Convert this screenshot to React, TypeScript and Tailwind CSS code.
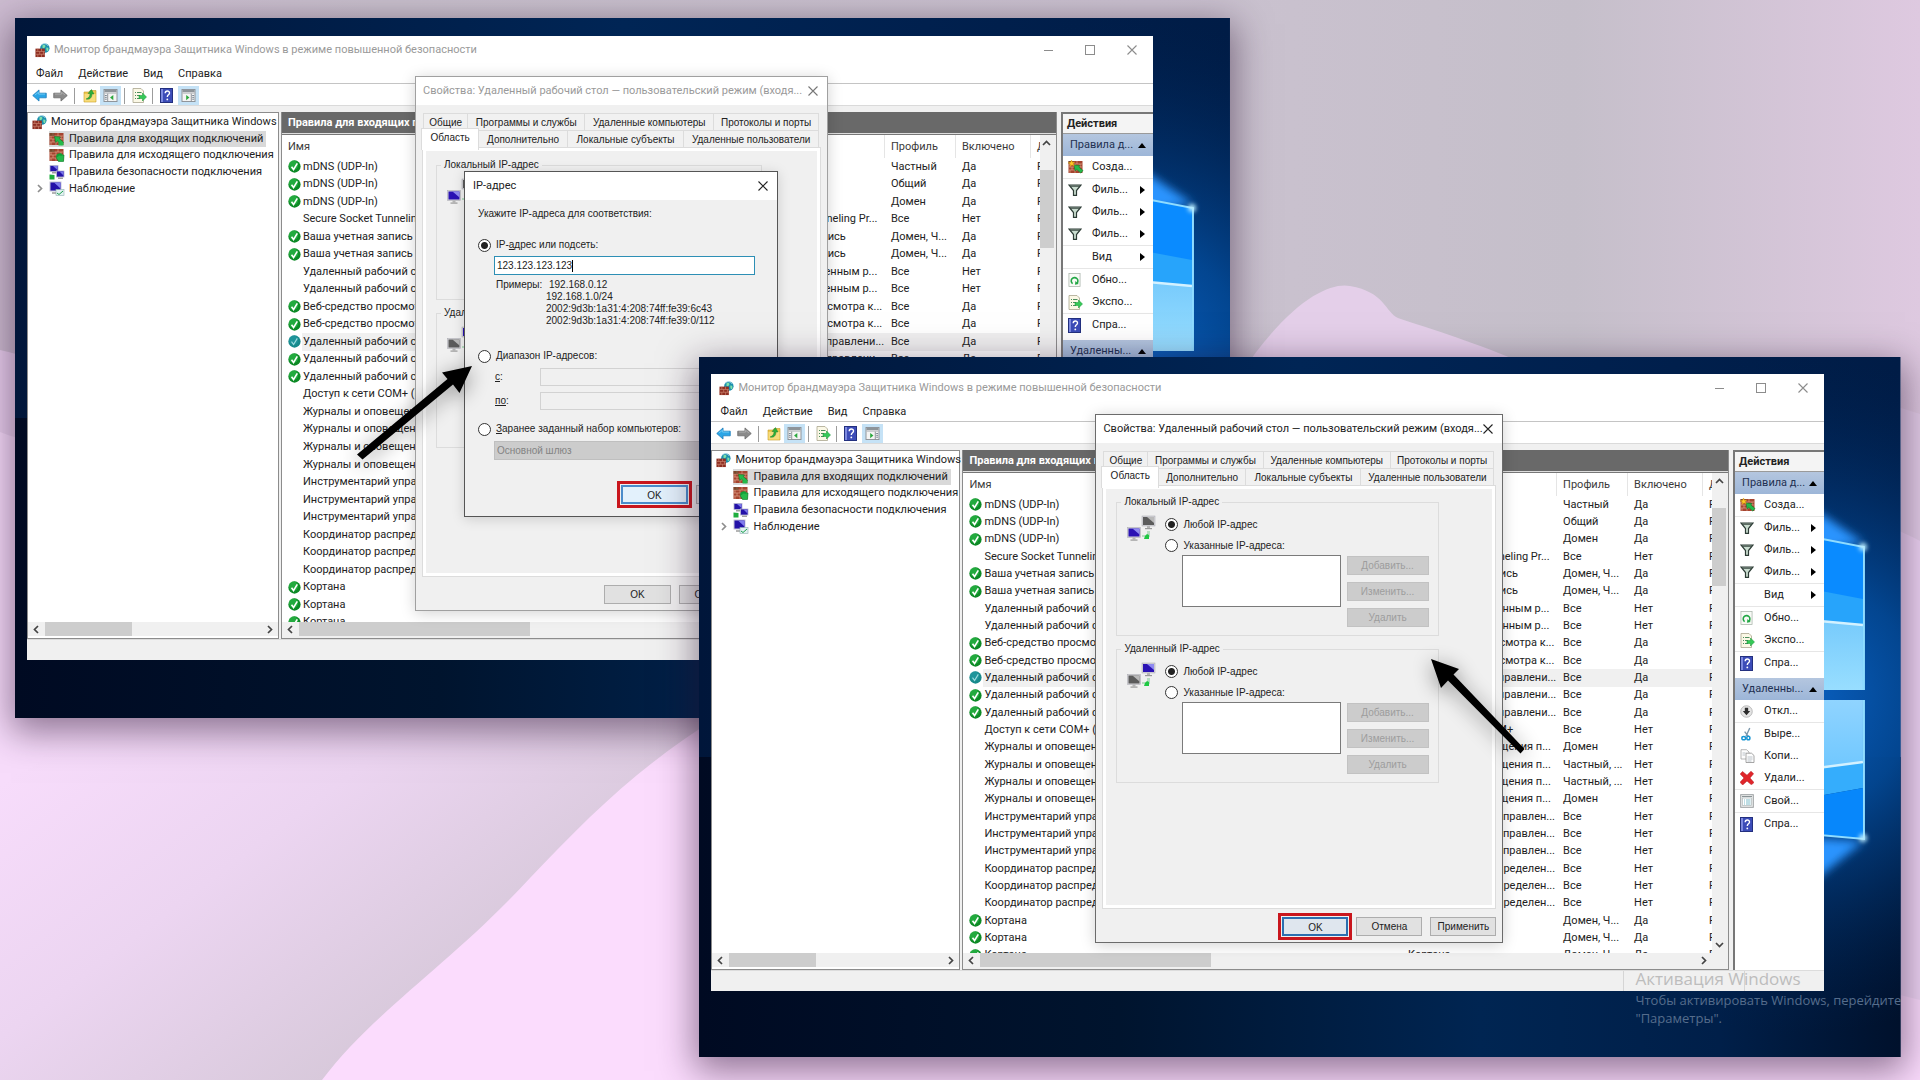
import React, { useId } from "react";
import { clsx } from "clsx";

const UI = "font-['Roboto','Noto_Sans',sans-serif]";
const CLASSIC = "font-['Liberation_Sans',Arial,sans-serif]";

/* ---------- icons ---------- */

function BricksIcon({ children }: { children?: React.ReactNode }) {
  return (
    <svg viewBox="0 0 16 14" className="h-[14px] w-4 shrink-0" aria-hidden="true">
      <rect x="0.5" y="1" width="14" height="12" fill="#a5442f" />
      <path d="M0.5 4h14M0.5 7h14M0.5 10h14M4 1v3M9 1v3M2 4v3M7 4v3M12 4v3M4 7v3M9 7v3M2 10v3M7 10v3M12 10v3" stroke="#e0a08a" strokeWidth="0.7" />
      <rect x="0.5" y="1" width="5" height="3" fill="#5d4a2c" opacity="0.6" />
      {children}
    </svg>
  );
}

function InboundIcon() {
  return (
    <BricksIcon>
      <path d="M5.5 4.5l6 0.5-1.2 1.6 4.2 3.6-2.2 2.6-4-3.8-1.6 1.6z" fill="#25b94a" stroke="#0c7a26" strokeWidth="0.6" />
      <path d="M9.5 10.500h5v3h-5z" fill="#25b94a" />
    </BricksIcon>
  );
}

function OutboundIcon() {
  return (
    <BricksIcon>
      <path d="M15 7l-.5 6.500H9.500L7.200 9.800l1.600-1.600-1-1.400z" fill="#25b94a" stroke="#0c7a26" strokeWidth="0.6" />
      <path d="M8 9a3 3 0 0 1 5-2" fill="none" stroke="#0fa236" strokeWidth="2" />
    </BricksIcon>
  );
}

function NewRuleIcon() {
  return (
    <BricksIcon>
      <path d="M6 5l6 .5-1.2 1.5 4.2 3.5-2.2 2.6-4-3.6L7.200 11z" fill="#25b94a" stroke="#0c7a26" strokeWidth="0.6" />
      <path d="M3.500 0l.9 2.2L6.800 2 5.300 3.700l1 2.200-2.300-1-1.900 1.500.2-2.400L.2 2.800l2.400-.6z" fill="#ffc928" stroke="#c98a00" strokeWidth="0.400" />
    </BricksIcon>
  );
}

function FirewallIcon() {
  return (
    <svg viewBox="0 0 16 16" className="h-[15px] w-[15px] shrink-0" aria-hidden="true">
      <circle cx="10.500" cy="5.500" r="5" fill="#1c8fae" />
      <path d="M8 2.500c2-1.500 3.500 0 3 1.500S8.500 6 8 5zM12 5c2-.5 3 1 2 3s-2 0-2-3z" fill="#7fe0a8" />
      <path d="M7 2c2-2 5-1.500 7 1" stroke="#bdeaf5" strokeWidth="0.800" fill="none" />
      <rect x="0.500" y="6" width="10" height="9" fill="#8e2f22" />
      <path d="M.5 9h10M.5 12h10M3 6v3M7 6v3M5 9v3M9 9v3M3 12v3M7 12v3" stroke="#d08a74" strokeWidth="0.700" />
    </svg>
  );
}

function Monitor({ x, y, on }: { x: number; y: number; on: boolean }) {
  return (
    <g transform={`translate(${x} ${y})`}>
      <rect width="13" height="10" fill="#d4d4d8" stroke="#a5a5ad" strokeWidth="0.500" />
      <rect x="1" y="1" width="11" height="8" fill={on ? "#2a12b4" : "#5b5b5b"} />
      <path d="M5 1h7v6z" fill={on ? "#8f8af0" : "#b9b9b9"} />
      <path d="M5 10h3v2H5z" fill="#b5b5b5" />
      <path d="M3 12h7v1.200H3z" fill="#9b9b9b" />
    </g>
  );
}

function LinkedPcsIcon({ localActive }: { localActive: boolean }) {
  return (
    <svg viewBox="0 0 29 27" className="h-[27px] w-[29px] shrink-0" aria-hidden="true">
      <Monitor x={15} y={1} on={!localActive} />
      <Monitor x={0.5} y={12.500} on={localActive} />
      <path d="M15 20h5v-4h3v6h-8z" fill="#b7dcc0" />
      <path d="M17 24l1-3 2-2 2 1v4z" fill="#1fc843" />
    </svg>
  );
}

function SecurityIcon() {
  return (
    <svg viewBox="0 0 16 15" className="h-[15px] w-4 shrink-0" aria-hidden="true">
      <rect x="1" y="0.500" width="8" height="6" fill="#2412a8" stroke="#b7b7cf" strokeWidth="0.800" />
      <path d="M4 1h4.500v4z" fill="#7a78ea" />
      <rect x="3" y="7" width="4" height="1.500" fill="#a2a2a2" />
      <rect x="7.500" y="6" width="7.500" height="6" fill="#2412a8" stroke="#b7b7cf" strokeWidth="0.800" />
      <path d="M10.500 6.500h4v4z" fill="#7a78ea" />
      <rect x="9" y="12.500" width="5" height="1.500" fill="#a2a2a2" />
      <path d="M.5 14.500V9.500l5 .5v4.500z" fill="#1fae3e" />
    </svg>
  );
}

function MonitoringIcon() {
  return (
    <svg viewBox="0 0 16 15" className="h-[15px] w-4 shrink-0" aria-hidden="true">
      <rect x="1" y="1" width="11" height="9" fill="#2412a8" stroke="#c5c5d6" />
      <path d="M5 1.500h6.500v6z" fill="#7f7dec" />
      <rect x="3" y="11" width="7" height="2" fill="#b5b5b5" />
      <rect x="7" y="8.500" width="8" height="6" fill="#e2f1f1" stroke="#8fb1b1" strokeWidth="0.600" />
      <path d="M8 12l2 1.500L14 10" fill="none" stroke="#18a04a" strokeWidth="1" />
    </svg>
  );
}

function CheckIcon({ dim }: { dim?: boolean }) {
  return (
    <svg viewBox="0 0 14 14" className="size-[13px] shrink-0" aria-hidden="true">
      <circle cx="7" cy="7" r="6.600" fill={dim ? "#178a8c" : "#0d8a26"} />
      <circle cx="6" cy="5.500" r="5" fill={dim ? "#2298a0" : "#2cb848"} opacity="0.700" />
      <path d="M3.800 7.200l2.200 3L10 3.600" fill="none" stroke={dim ? "#9fdde0" : "#ffffff"} strokeWidth={dim ? 1.200 : 1.700} />
    </svg>
  );
}

function ArrowIcon({ back }: { back?: boolean }) {
  return (
    <svg viewBox="0 0 16 14" className={clsx("h-[13px] w-[15px] shrink-0", !back && "-scale-x-100")} aria-hidden="true">
      <path d="M.7 7L7.500 1v3.500h7.800v5H7.500V13z" fill={back ? "#2aa5e6" : "#8b8b8b"} stroke={back ? "#1878b8" : "#666"} strokeWidth="0.800" />
      <path d="M3 6.500l4-3v2h7" fill="none" stroke={back ? "#7fd3f7" : "#b5b5b5"} strokeWidth="0.800" />
    </svg>
  );
}

function FolderUpIcon() {
  return (
    <svg viewBox="0 0 14 15" className="h-[15px] w-[14px]" aria-hidden="true">
      <path d="M1 4h5l1-1.500h6V14H1z" fill="#efc84f" stroke="#c39a28" strokeWidth="0.600" />
      <path d="M1.500 6h11v7.500h-11z" fill="#f7dc7d" />
      <path d="M3 11c3-1 4-3 4-5.500H5L8.500 1.500 11 6H9c0 4-2.500 6-6 5z" fill="#2fae3b" stroke="#15792a" strokeWidth="0.400" />
    </svg>
  );
}

function PaneIcon({ flip }: { flip?: boolean }) {
  return (
    <svg viewBox="0 0 15 14" className="h-[13px] w-[15px]" aria-hidden="true">
      <rect x="0.500" y="0.500" width="14" height="13" fill="#f4f4f4" stroke="#8a8f94" />
      <rect x="1" y="1" width="13" height="2.500" fill="#8d9499" />
      <path d="M1 4.500h13" stroke="#b2b8bc" />
      <path d={flip ? "M10.500 5v8.500" : "M4.500 5v8.500"} stroke="#8a8f94" />
      <path d={flip ? "M11.500 7h2M11.500 9h2M11.500 11h2" : "M1.500 7h2M1.500 9h2M1.500 11h2"} stroke="#6f7f8f" />
      <path d={flip ? "M5 6.500v5.500L8.500 9.200z" : "M10.500 6.500v5.500L7 9.200z"} fill="#2ba83d" />
    </svg>
  );
}

function ExportIcon() {
  return (
    <svg viewBox="0 0 15 15" className="h-[15px] w-[15px] shrink-0" aria-hidden="true">
      <path d="M1 .5h8l2.500 2.500v11.500H1z" fill="#fbf8e6" stroke="#a9a68e" strokeWidth="0.800" />
      <path d="M3 4.500h1M3 7.500h1M3 10.500h1M5 4.500h4.500M5 7.500h3M5 10.500h3" stroke="#4d8f5e" strokeWidth="1" />
      <path d="M7 7.500h3.500V5l4 4-4 4v-2.500H7z" fill="#35c957" stroke="#139233" strokeWidth="0.500" />
    </svg>
  );
}

function HelpIcon() {
  return (
    <svg viewBox="0 0 13 15" className="h-[15px] w-[13px] shrink-0" aria-hidden="true">
      <rect x="0.500" y="0.500" width="12" height="14" fill="#3c4cb8" stroke="#23307f" />
      <rect x="1" y="1" width="2" height="13" fill="#7d8ae0" />
      <path d="M5.200 5.200c0-3 4.300-2.800 4.300-.3 0 1.900-2.200 1.800-2.200 4" fill="none" stroke="#fff" strokeWidth="1.400" />
      <circle cx="7.300" cy="11.400" r="0.900" fill="#fff" />
    </svg>
  );
}

function FilterIcon() {
  return (
    <svg viewBox="0 0 14 12" className="h-3 w-[14px] shrink-0" aria-hidden="true">
      <path d="M1 1h12L8.500 6.500v4.800H5.500V6.500z" fill="#c9dccf" stroke="#2d3c36" strokeWidth="1.200" />
      <path d="M3 2.200h8" stroke="#2d3c36" strokeWidth="1" />
    </svg>
  );
}

function RefreshIcon() {
  return (
    <svg viewBox="0 0 14 15" className="h-[14px] w-[13px] shrink-0" aria-hidden="true">
      <rect x="1" y="0.500" width="12" height="14" fill="#f8faf6" stroke="#a7b3a9" strokeWidth="0.800" />
      <path d="M5 11.500a3.600 3.600 0 1 1 4.500-.3" fill="none" stroke="#22a745" strokeWidth="1.700" />
      <path d="M8 8.500l3.500 3.200-4 1z" fill="#22a745" />
    </svg>
  );
}

function DisableIcon() {
  return (
    <svg viewBox="0 0 14 14" className="size-[13px] shrink-0" aria-hidden="true">
      <circle cx="7" cy="7" r="6.200" fill="#e4e4e4" stroke="#b5b5b5" />
      <path d="M5.200 3h3.600V6.500H11L7 11 3 6.500h2.200z" fill="#2c2c2c" />
    </svg>
  );
}

function CutIcon() {
  return (
    <svg viewBox="0 0 14 15" className="h-[14px] w-[13px] shrink-0" aria-hidden="true">
      <path d="M10.500 1L6.500 10M5 5l4 5" stroke="#7b98ad" strokeWidth="1.500" fill="none" />
      <ellipse cx="4" cy="12" rx="2" ry="1.700" fill="none" stroke="#1795d4" strokeWidth="1.600" />
      <ellipse cx="9" cy="11.800" rx="1.700" ry="2" fill="none" stroke="#1795d4" strokeWidth="1.600" />
    </svg>
  );
}

function CopyIcon() {
  return (
    <svg viewBox="0 0 15 14" className="h-[14px] w-[15px] shrink-0" aria-hidden="true">
      <path d="M1 .7h5.500L9 3v7H1z" fill="#fdfdfd" stroke="#a3a3a3" strokeWidth="0.800" />
      <path d="M6 4.200h5.500L14 6.500v7H6z" fill="#fdfdfd" stroke="#8f8f8f" strokeWidth="0.800" />
      <path d="M2.500 4h3M2.500 6h2.500M7.500 8h5M7.500 10h5M7.500 12h4" stroke="#a9b3bb" strokeWidth="0.800" />
    </svg>
  );
}

function DeleteIcon() {
  return (
    <svg viewBox="0 0 14 14" className="size-[14px] shrink-0" aria-hidden="true">
      <path d="M2.500.5L7 4.200 11 .2l2.600 2.600L10 7l4 4.500-2.600 2.300L7 10l-4.300 4L0 11.300 4 7 .2 3z" fill="#e0262b" stroke="#b3151b" strokeWidth="0.500" />
    </svg>
  );
}

function PropertiesIcon() {
  return (
    <svg viewBox="0 0 14 14" className="size-[14px] shrink-0" aria-hidden="true">
      <rect x="0.700" y="0.700" width="12.600" height="12.600" fill="#eff1f1" stroke="#9b9fa1" />
      <rect x="2.500" y="4" width="9" height="7.500" fill="#fff" stroke="#b0b8ba" strokeWidth="0.700" />
      <path d="M2 2.500h10" stroke="#8a9396" />
      <path d="M4 6h1M6 6h4.500M4 8h1M6 8h4.500M4 10h1M6 10h4.500" stroke="#6fb6c4" strokeWidth="0.900" />
    </svg>
  );
}

function CloseGlyph() {
  return (
    <svg viewBox="0 0 10 10" className="size-[10px]" aria-hidden="true">
      <path d="M.5.5l9 9M9.500.5l-9 9" stroke="currentColor" strokeWidth="1.100" />
    </svg>
  );
}

function Chevron({ dir }: { dir: "left" | "right" | "up" | "down" }) {
  const d = {
    left: "M6 1L2.500 4.500 6 8",
    right: "M3 1l3.500 3.500L3 8",
    up: "M1 6l3.500-3.500L8 6",
    down: "M1 3l3.500 3.500L8 3",
  }[dir];
  return (
    <svg viewBox="0 0 9 9" className="size-[9px]" aria-hidden="true">
      <path d={d} fill="none" stroke="#444" strokeWidth="1.700" />
    </svg>
  );
}

/* ---------- window parts ---------- */

function HScroll({ thumb }: { thumb: string }) {
  return (
    <div className="mb-[2px] flex h-[14px] shrink-0 items-center bg-[#f0f0f0]">
      <button type="button" aria-label="Прокрутить влево" className="flex w-[17px] justify-center">
        <Chevron dir="left" />
      </button>
      <div className="h-full flex-1">
        <div className={clsx("h-full bg-[#cdcdcd]", thumb)} />
      </div>
      <button type="button" aria-label="Прокрутить вправо" className="flex w-[17px] justify-center">
        <Chevron dir="right" />
      </button>
    </div>
  );
}

function ToolSep() {
  return <div className="h-4 w-px bg-[#9c9c9c]" />;
}

type Rule = [name: string, group: string, profile: string, enabled: string, state: 0 | 1 | 2];

const RULES: Rule[] = [
  ["mDNS (UDP-In)", "mDNS", "Частный", "Да", 1],
  ["mDNS (UDP-In)", "mDNS", "Общий", "Да", 1],
  ["mDNS (UDP-In)", "mDNS", "Домен", "Да", 1],
  ["Secure Socket Tunneling Protocol", "Secure Socket Tunneling Pr...", "Все", "Нет", 0],
  ["Ваша учетная запись", "Ваша учетная запись", "Домен, Ч...", "Да", 1],
  ["Ваша учетная запись", "Ваша учетная запись", "Домен, Ч...", "Да", 1],
  ["Удаленный рабочий стол", "Управление удаленным р...", "Все", "Нет", 0],
  ["Удаленный рабочий стол", "Управление удаленным р...", "Все", "Нет", 0],
  ["Веб-средство просмотра", "Веб-средство просмотра к...", "Все", "Да", 1],
  ["Веб-средство просмотра", "Веб-средство просмотра к...", "Все", "Да", 1],
  ["Удаленный рабочий стол", "Дистанционное управлени...", "Все", "Да", 2],
  ["Удаленный рабочий стол", "Дистанционное управлени...", "Все", "Да", 1],
  ["Удаленный рабочий стол", "Дистанционное управлени...", "Все", "Да", 1],
  ["Доступ к сети COM+ (DCOM)", "Доступ к сети COM+", "Все", "Нет", 0],
  ["Журналы и оповещения", "Журналы и оповещения п...", "Домен", "Нет", 0],
  ["Журналы и оповещения", "Журналы и оповещения п...", "Частный, ...", "Нет", 0],
  ["Журналы и оповещения", "Журналы и оповещения п...", "Частный, ...", "Нет", 0],
  ["Журналы и оповещения", "Журналы и оповещения п...", "Домен", "Нет", 0],
  ["Инструментарий управления", "Инструментарий управлен...", "Все", "Нет", 0],
  ["Инструментарий управления", "Инструментарий управлен...", "Все", "Нет", 0],
  ["Инструментарий управления", "Инструментарий управлен...", "Все", "Нет", 0],
  ["Координатор распределения", "Координатор распределен...", "Все", "Нет", 0],
  ["Координатор распределения", "Координатор распределен...", "Все", "Нет", 0],
  ["Координатор распределения", "Координатор распределен...", "Все", "Нет", 0],
  ["Кортана", "Кортана", "Домен, Ч...", "Да", 1],
  ["Кортана", "Кортана", "Домен, Ч...", "Да", 1],
  ["Кортана", "Кортана", "Домен, Ч...", "Да", 1],
];

function RulesTable({ height }: { height: string }) {
  const th = "h-[23px] border-l border-[#e5e5e5] py-0 pl-[6px] text-left font-normal text-[#3a3a3a]";
  return (
    <table className={clsx("w-full table-fixed border-separate border-spacing-0 leading-[16px] whitespace-nowrap", height)}>
      <colgroup>
        <col />
        <col className="w-[155px]" />
        <col className="w-[71px]" />
        <col className="w-[75px]" />
        <col className="w-[10px]" />
      </colgroup>
      <thead>
        <tr>
          <th className="h-[23px] py-0 pl-[6px] text-left font-normal text-[#3a3a3a]">Имя</th>
          <th className={th}>Группа</th>
          <th className={th}>Профиль</th>
          <th className={th}>Включено</th>
          <th className={clsx(th, "overflow-hidden")}>Действие</th>
        </tr>
      </thead>
      <tbody>
        {RULES.map(([name, group, profile, enabled, state], i) => (
          <tr key={i} className={clsx(state === 2 && "bg-[linear-gradient(to_right,transparent_20px,#f0f0f0_20px)]")}>
            <td className="overflow-hidden p-0 pl-[6px]">
              <span className="flex items-center gap-[2px]">
                <span className="flex w-[13px] shrink-0">{state > 0 && <CheckIcon dim={state === 2} />}</span>
                {name}
              </span>
            </td>
            <td className="p-0 pl-[7px]">{group}</td>
            <td className="p-0 pl-[7px]">{profile}</td>
            <td className="p-0 pl-[7px]">{enabled}</td>
            <td className="overflow-hidden p-0 pl-[7px]">Разрешить</td>
          </tr>
        ))}
      </tbody>
    </table>
  );
}

function ActionGroup({ title }: { title: string }) {
  return (
    <h3 className="flex h-[22px] shrink-0 items-center bg-gradient-to-b from-[#b4c6df] to-[#9db6d8] pr-[7px] pl-[7px] text-[#1f3152]">
      <span className="flex-1 truncate">{title}</span>
      <svg viewBox="0 0 8 5" className="h-[5px] w-2" aria-hidden="true">
        <path d="M4 0l4 5H0z" fill="#000" />
      </svg>
    </h3>
  );
}

function Action({ icon, label, more, line }: { icon?: React.ReactNode; label: string; more?: boolean; line?: boolean }) {
  return (
    <li className={clsx("h-[22px] shrink-0", line && "mb-px")}>
      <button type="button" className={clsx("flex h-full w-full items-center pr-2 pl-[5px]", line && "shadow-[0_1px_0_#e6e6e6]")}>
        <span className="flex w-[24px] shrink-0">{icon}</span>
        <span className="flex-1 text-left">{label}</span>
        {more && (
          <svg viewBox="0 0 5 8" className="h-2 w-[5px]" aria-hidden="true">
            <path d="M0 0l5 4-5 4z" fill="#000" />
          </svg>
        )}
      </button>
    </li>
  );
}

function ActionsPane() {
  return (
    <aside className="flex min-h-0 min-w-0 flex-col overflow-hidden border-t-2 border-l-2 border-[#777] bg-white">
      <h2 className="h-[20px] shrink-0 border-b border-[#9a9a9a] bg-[#f4f4f4] pl-[4px] leading-[19px] font-bold text-[#222]">Действия</h2>
      <ActionGroup title="Правила д..." />
      <ul>
        <Action icon={<NewRuleIcon />} label="Созда..." line />
        <Action icon={<FilterIcon />} label="Филь..." more />
        <Action icon={<FilterIcon />} label="Филь..." more />
        <Action icon={<FilterIcon />} label="Филь..." more line />
        <Action label="Вид" more line />
        <Action icon={<RefreshIcon />} label="Обно..." />
        <Action icon={<ExportIcon />} label="Экспо..." line />
        <Action icon={<HelpIcon />} label="Спра..." />
      </ul>
      <div className="h-1 shrink-0" />
      <ActionGroup title="Удаленны..." />
      <ul>
        <Action icon={<DisableIcon />} label="Откл..." line />
        <Action icon={<CutIcon />} label="Выре..." />
        <Action icon={<CopyIcon />} label="Копи..." />
        <Action icon={<DeleteIcon />} label="Удали..." line />
        <Action icon={<PropertiesIcon />} label="Свой..." line />
        <Action icon={<HelpIcon />} label="Спра..." />
      </ul>
    </aside>
  );
}

function TreeItem({ icon, label, selected, chevron }: { icon: React.ReactNode; label: string; selected?: boolean; chevron?: boolean }) {
  return (
    <li className="flex items-center pl-[7px]">
      <span className="flex w-[14px] opacity-60">{chevron && <Chevron dir="right" />}</span>
      <button type="button" className={clsx("flex h-4 items-center gap-1 pr-[3px]", selected && "bg-[#d9d9d9]")}>
        {icon}
        <span>{label}</span>
      </button>
    </li>
  );
}

function FirewallWindow({ body, table, children }: { body: string; table: string; children?: React.ReactNode }) {
  return (
    <section className={clsx("relative flex flex-col bg-white text-[11px] leading-[16px] text-[#222]", UI)}>
      <header className="flex h-7 items-center pl-[8px] text-[#9a9a9a]">
        <FirewallIcon />
        <h1 className="ml-1 flex-1 truncate">Монитор брандмауэра Защитника Windows в режиме повышенной безопасности</h1>
        <div className="flex items-center gap-8 pr-4">
          <button type="button" aria-label="Свернуть" className="h-px w-[9px] bg-[#8c8c8c]" />
          <button type="button" aria-label="Развернуть" className="size-[10px] border border-[#8c8c8c]" />
          <button type="button" aria-label="Закрыть" className="text-[#8c8c8c]">
            <CloseGlyph />
          </button>
        </div>
      </header>
      <nav className="flex h-5 items-center gap-[15px] border-b border-[#c4c4c4] pl-[9px]">
        <button type="button">Файл</button>
        <button type="button">Действие</button>
        <button type="button">Вид</button>
        <button type="button">Справка</button>
      </nav>
      <div className="flex h-[22px] items-center border-b border-[#dadada] pt-[2px] pl-[5px]">
        <button type="button" aria-label="Назад"><ArrowIcon back /></button>
        <button type="button" aria-label="Вперед" className="mr-[6px] ml-[6px]"><ArrowIcon /></button>
        <ToolSep />
        <button type="button" aria-label="Вверх" className="mr-[3px] ml-[8px]"><FolderUpIcon /></button>
        <button type="button" aria-label="Дерево" className="mr-[3px] flex h-[19px] w-[21px] items-center justify-center bg-[#c5e2f6]"><PaneIcon /></button>
        <ToolSep />
        <button type="button" aria-label="Экспорт" className="mr-[5px] ml-[7px]"><ExportIcon /></button>
        <ToolSep />
        <button type="button" aria-label="Справка" className="mr-[5px] ml-[7px]"><HelpIcon /></button>
        <button type="button" aria-label="Действия" className="flex h-[19px] w-[21px] items-center justify-center bg-[#c5e2f6]"><PaneIcon flip /></button>
      </div>
      <div className={clsx("grid grid-cols-[252fr_778fr_92fr] grid-rows-[minmax(0,1fr)] gap-x-[2px] bg-[#f0f0f0] pt-[6px]", body)}>
        <div className="flex min-w-0 flex-col border border-[#8c8c8c] bg-white">
          <ul className="mt-px grid h-[83px] auto-rows-fr whitespace-nowrap">
            <li className="flex items-center pl-1">
              <button type="button" className="flex items-center gap-1">
                <FirewallIcon />
                <span>Монитор брандмауэра Защитника Windows</span>
              </button>
            </li>
            <TreeItem icon={<InboundIcon />} label="Правила для входящих подключений" selected />
            <TreeItem icon={<OutboundIcon />} label="Правила для исходящего подключения" />
            <TreeItem icon={<SecurityIcon />} label="Правила безопасности подключения" />
            <TreeItem icon={<MonitoringIcon />} label="Наблюдение" chevron />
          </ul>
          <div className="flex-1" />
          <HScroll thumb="w-[87px]" />
        </div>
        <div className="mr-[2px] flex min-w-0 flex-col border-x border-b border-[#8c8c8c] bg-white">
          <h2 className="h-[21px] shrink-0 bg-[#696969] pl-[6px] leading-[22px] font-bold text-white">Правила для входящих подключений</h2>
          <div className="h-[2px] shrink-0 border-b border-[#777] bg-[#ddd]" />
          <div className="flex min-h-0 flex-1">
            <div className="min-w-0 flex-1 overflow-hidden">
              <RulesTable height={table} />
            </div>
            <div className="flex w-[14px] flex-col items-center bg-[#f0f0f0]">
              <button type="button" aria-label="Прокрутить вверх" className="flex h-[35px] pt-[4px]"><Chevron dir="up" /></button>
              <div className="h-[78px] w-full bg-[#cdcdcd]" />
              <div className="flex-1" />
              <button type="button" aria-label="Прокрутить вниз" className="pb-[4px]"><Chevron dir="down" /></button>
            </div>
            <div className="w-[2px] bg-[#f0f0f0]" />
          </div>
          <div className="shrink-0 bg-[#f0f0f0] pr-[16px]">
            <HScroll thumb="w-[231px]" />
          </div>
        </div>
        <ActionsPane />
      </div>
      <footer className="flex h-[21px] border-t border-[#dcdcdc] bg-[#f0f0f0]">
        <div className="flex-1" />
        <div className="w-[121px] border-l border-[#d5d5d5]" />
        <div className="w-[80px] border-l border-[#d5d5d5]" />
      </footer>
      {children}
    </section>
  );
}

/* ---------- dialogs ---------- */

function Radio({ name, label, checked, className }: { name: string; label: React.ReactNode; checked?: boolean; className?: string }) {
  return (
    <label className={clsx("flex items-center gap-[5px]", className)}>
      <input
        type="radio"
        name={name}
        defaultChecked={checked}
        className="size-[13px] shrink-0 appearance-none rounded-full border border-[#333] bg-white checked:bg-[radial-gradient(circle,#222_3px,#fff_4px)]"
      />
      <span>{label}</span>
    </label>
  );
}

function PushButton({ label, primary, hot, framed, wide }: { label: string; primary?: boolean; hot?: boolean; framed?: boolean; wide?: boolean }) {
  return (
    <button
      type="button"
      className={clsx(
        "h-[19px] border leading-[17px]",
        wide ? "w-[67px]" : "w-[66px]",
        primary ? "border-2 border-[#2b6fb0] bg-[#dfe6ee] leading-[15px]" : hot ? "border-2 border-[#4a8ccb] bg-[#e3f1fc] leading-[15px]" : "border-[#adadad] bg-[#e1e1e1]",
        framed && "outline-[3px] outline-offset-[1px] outline-[#c9161d]",
      )}
    >
      {label}
    </button>
  );
}

function Tab({ label, selected }: { label: string; selected?: boolean }) {
  return (
    <button
      type="button"
      role="tab"
      aria-selected={!!selected}
      className={clsx(
        "overflow-hidden border-t border-r border-[#dcdcdc] whitespace-nowrap",
        selected ? "relative -mt-[2px] -mb-[3px] -ml-[2px] border-l bg-white pb-[5px]" : "bg-[#f1f1f1] first:border-l",
      )}
    >
      {label}
    </button>
  );
}

function ScopeGroup({ title, local, height }: { title: string; local: boolean; height: string }) {
  const id = useId();
  return (
    <fieldset className={clsx("relative flex w-[85%] border border-[#dcdcdc] pr-[9px] pl-[10px]", height)}>
      <legend className="absolute -top-[8px] left-[4px] bg-[#f0f0f0] px-[3px] leading-[14px]">{title}</legend>
      <div className="pt-[12px]">
        <LinkedPcsIcon localActive={local} />
      </div>
      <div className="ml-[9px] flex flex-1 flex-col pt-[14px]">
        <Radio name={id} label="Любой IP-адрес" checked className="h-[14px]" />
        <Radio name={id} label="Указанные IP-адреса:" className="mt-[7px] h-[14px]" />
        <div className="mt-[3px] ml-[17px] flex gap-[6px]">
          <select multiple aria-label={title} className="h-[52px] min-w-0 flex-1 appearance-none border border-[#7a7a7a] bg-white" />
          <div className="flex w-[82px] flex-col gap-[7px] pt-px text-[#9d9d9d]">
            <button type="button" disabled className="h-[19px] border border-[#c2c2c2] bg-[#cccccc]">Добавить...</button>
            <button type="button" disabled className="h-[19px] border border-[#c2c2c2] bg-[#cccccc]">Изменить...</button>
            <button type="button" disabled className="h-[19px] border border-[#c2c2c2] bg-[#cccccc]">Удалить</button>
          </div>
        </div>
      </div>
    </fieldset>
  );
}

function PropertiesDialog({ active, place }: { active: boolean; place: string }) {
  const group = active ? "h-[134px]" : "h-[135px]";
  return (
    <div role="dialog" className={clsx("absolute flex flex-col border bg-[#f0f0f0] shadow-[0_2px_14px_rgba(0,0,0,0.18)]", active ? "border-[#6b6b6b]" : "border-[#a0a0a0]", place)}>
      <header className={clsx("flex h-7 shrink-0 items-center bg-white pr-[9px] pl-[7px]", active ? "text-[#222]" : "text-[#9a9a9a]")}>
        <h2 className="flex-1 whitespace-nowrap">Свойства: Удаленный рабочий стол — пользовательский режим (входя...</h2>
        <button type="button" aria-label="Закрыть" className={active ? "text-[#222]" : "text-[#777]"}><CloseGlyph /></button>
      </header>
      <div className={clsx("flex min-h-0 flex-1 flex-col px-[6px] pt-2 pb-[6px] text-[10px] leading-[15px]", CLASSIC)}>
        <div role="tablist" className="mr-[2px] ml-[1px]">
          <div className="grid h-[17px] grid-cols-[45fr_116fr_128fr_104fr]">
            <Tab label="Общие" />
            <Tab label="Программы и службы" />
            <Tab label="Удаленные компьютеры" />
            <Tab label="Протоколы и порты" />
          </div>
          <div className="grid h-[17px] grid-cols-[56fr_88fr_116fr_134fr]">
            <Tab label="Область" selected />
            <Tab label="Дополнительно" />
            <Tab label="Локальные субъекты" />
            <Tab label="Удаленные пользователи" />
          </div>
        </div>
        <div className={clsx("flex flex-1 flex-col gap-[13px] border border-[#dcdcdc] bg-[#f0f0f0] pl-[13px] shadow-[inset_0_0_0_3px_#fff]", active ? "pt-4" : "pt-[17px]")}>
          <ScopeGroup title="Локальный IP-адрес" local height={group} />
          <ScopeGroup title="Удаленный IP-адрес" local={false} height={group} />
        </div>
        <div className="mt-2 flex justify-end gap-2">
          <PushButton label="OK" primary={active} framed={active} wide={!active} />
          <PushButton label="Отмена" wide={!active} />
          <PushButton label="Применить" wide={!active} />
        </div>
      </div>
    </div>
  );
}

function IpDialog() {
  const id = useId();
  return (
    <div role="dialog" className="absolute top-[135px] left-[437px] flex h-[346px] w-[314px] flex-col border border-[#555] bg-[#f0f0f0] shadow-[0_2px_12px_rgba(0,0,0,0.15)]">
      <header className="flex h-7 shrink-0 items-center justify-between bg-white pr-[9px] pl-[8px]">
        <h2>IP-адрес</h2>
        <button type="button" aria-label="Закрыть" className="text-[#222]"><CloseGlyph /></button>
      </header>
      <div className={clsx("flex flex-1 flex-col pt-[7px] pr-[22px] pl-[13px] text-[10px] leading-[14px]", CLASSIC)}>
        <p>Укажите IP-адреса для соответствия:</p>
        <Radio name={id} checked label={<>IP-<u>а</u>дрес или подсеть:</>} className="mt-[17px]" />
        <div className="mt-[4px] ml-[16px] flex h-[19px] items-center border border-[#2d8fb5] bg-white pl-[2px]">
          <input aria-label="IP-адрес или подсеть" defaultValue="123.123.123.123" className="field-sizing-content outline-none" />
          <span className="h-3 w-px bg-black" />
        </div>
        <div className="mt-[4px] ml-[18px] flex leading-[12px]">
          <p className="w-[50px]">Примеры:</p>
          <div>
            <p className="pl-[3px]">192.168.0.12</p>
            <p>192.168.1.0/24</p>
            <p>2002:9d3b:1a31:4:208:74ff:fe39:6c43</p>
            <p>2002:9d3b:1a31:4:208:74ff:fe39:0/112</p>
          </div>
        </div>
        <Radio name={id} label={<><u>Д</u>иапазон IP-адресов:</>} className="mt-[22px]" />
        <label className="mt-[5px] ml-[17px] flex items-center">
          <span className="w-[45px]"><u>с</u>:</span>
          <input disabled className="h-[18px] min-w-0 flex-1 border border-[#d2d2d2] bg-[#f0f0f0]" />
        </label>
        <label className="mt-[6px] ml-[17px] flex items-center">
          <span className="w-[45px]"><u>по</u>:</span>
          <input disabled className="h-[18px] min-w-0 flex-1 border border-[#d2d2d2] bg-[#f0f0f0]" />
        </label>
        <Radio name={id} label={<><u>З</u>аранее заданный набор компьютеров:</>} className="mt-[12px]" />
        <select disabled aria-label="Набор компьютеров" className="mt-[5px] ml-[16px] h-[19px] appearance-none border border-[#bfbfbf] bg-[#cccccc] pl-[2px] text-[#838383] opacity-100">
          <option>Основной шлюз</option>
        </select>
        <div className="mt-[25px] -mr-[8px] flex justify-end gap-2">
          <PushButton label="OK" hot framed wide />
          <PushButton label="Отмена" wide />
        </div>
      </div>
    </div>
  );
}

/* ---------- scenery ---------- */

function Wallpaper() {
  const id = useId();
  const u = (n: string) => `url(#${id}${n})`;
  return (
    <svg viewBox="0 0 1215 700" preserveAspectRatio="none" className="absolute inset-0 h-full w-full" aria-hidden="true">
      <defs>
        <linearGradient id={`${id}base`} x1="0" y1="0" x2="1" y2="0">
          <stop offset="0" stopColor="#00163a" />
          <stop offset="0.5" stopColor="#002555" />
          <stop offset="0.75" stopColor="#00204e" />
          <stop offset="1" stopColor="#001c46" />
        </linearGradient>
        <linearGradient id={`${id}low`} x1="0" y1="0" x2="1" y2="0">
          <stop offset="0" stopColor="#000a22" />
          <stop offset="0.35" stopColor="#00142e" />
          <stop offset="0.65" stopColor="#002552" />
          <stop offset="0.85" stopColor="#001f49" />
          <stop offset="1" stopColor="#00112c" />
        </linearGradient>
        <radialGradient id={`${id}halo`} gradientUnits="userSpaceOnUse" cx="1110" cy="338" r="340">
          <stop offset="0" stopColor="#0a62c4" />
          <stop offset="0.35" stopColor="#034a98" stopOpacity="0.9" />
          <stop offset="1" stopColor="#00204e" stopOpacity="0" />
        </radialGradient>
        <linearGradient id={`${id}pale`} x1="0" y1="0" x2="0" y2="1">
          <stop offset="0" stopColor="#6cc4fb" />
          <stop offset="1" stopColor="#98deff" />
        </linearGradient>
        <linearGradient id={`${id}pale2`} x1="0" y1="0" x2="0" y2="1">
          <stop offset="0" stopColor="#90d4ff" />
          <stop offset="1" stopColor="#62c2ff" />
        </linearGradient>
        <filter id={`${id}blur`} x="-50%" y="-50%" width="200%" height="200%">
          <feGaussianBlur stdDeviation="5" />
        </filter>
        <filter id={`${id}soft`} x="-200%" y="-200%" width="500%" height="500%">
          <feGaussianBlur stdDeviation="2" />
        </filter>
      </defs>
      <rect width="1215" height="700" fill={u("base")} />
      <rect y="400" width="1215" height="300" fill={u("low")} />
      <rect width="1215" height="700" fill={u("halo")} />
      <path d="M1110 140l68 46-68 10z" fill="#2a94ff" filter={u("blur")} />
      <path d="M1110 480l68 4-68 54z" fill="#2a94ff" filter={u("blur")} />
      <path d="M900 140L1177 190V333H900z" fill="#0a8bff" />
      <path d="M900 190L1177 242V333H900z" fill="#27a4fb" />
      <path d="M900 240L1177 268V333H900z" fill={u("pale")} />
      <path d="M1100 261L1177 268" stroke="#d3f1ff" strokeWidth="2.500" />
      <path d="M900 343h277v62L900 440z" fill={u("pale2")} />
      <path d="M900 440L1177 405v26L900 480z" fill="#35adfc" />
      <path d="M900 480L1177 431v51L900 460z" fill="#0787fb" />
      <path d="M1100 415L1177 405" stroke="#d3f1ff" strokeWidth="2.500" />
      <path d="M1110 177L1178 190V333" fill="none" stroke="#8fdcff" strokeWidth="2" />
      <path d="M1178 343V482L1110 476" fill="none" stroke="#8fdcff" strokeWidth="2" />
      <circle cx="1177" cy="190" r="4" fill="#b9ecff" filter={u("soft")} />
      <circle cx="1177" cy="481" r="4" fill="#b9ecff" filter={u("soft")} />
    </svg>
  );
}

function Backdrop() {
  return (
    <svg viewBox="0 0 1920 1080" preserveAspectRatio="none" className="absolute inset-0 h-full w-full" aria-hidden="true">
      <defs>
        <linearGradient id="sky" x1="0" y1="0" x2="1" y2="0">
          <stop offset="0" stopColor="#cdbcd1" />
          <stop offset="0.2" stopColor="#c9c1cd" />
          <stop offset="0.6" stopColor="#cbc2d0" />
          <stop offset="0.82" stopColor="#c5bfca" />
          <stop offset="1" stopColor="#dec9e0" />
        </linearGradient>
        <linearGradient id="hill" gradientUnits="userSpaceOnUse" x1="60" y1="740" x2="330" y2="1100">
          <stop offset="0" stopColor="#f7dcfb" />
          <stop offset="0.45" stopColor="#ecd5f1" />
          <stop offset="1" stopColor="#d6c8d9" />
        </linearGradient>
      </defs>
      <rect width="1920" height="1080" fill="url(#sky)" />
      <path d="M1240 375C1290 300 1330 282 1350 286C1385 292 1385 312 1398 318C1440 332 1500 350 1560 380L1901 408L1920 414V1080H1240z" fill="#e4cfe9" />
      <path d="M1600 440C1750 470 1860 510 1920 541V1080H1600z" fill="#efd6f5" />
      <path d="M0 350C80 370 300 420 700 640V1080H0z" fill="#e9cfee" />
      <path d="M0 432C100 470 400 520 720 700V1080H0z" fill="url(#hill)" />
      <path d="M720 716C640 765 590 815 530 878C450 965 375 1010 322 1080H1920V1000L720 700z" fill="#fbdcfd" />
    </svg>
  );
}

function Pointer({ className, flip }: { className: string; flip?: boolean }) {
  return (
    <svg viewBox="0 0 114 94" className={clsx("absolute overflow-visible drop-shadow-[0_4px_10px_rgba(0,0,0,0.45)]", className)} aria-hidden="true">
      {flip ? (
        <path d="M0 0L28 10 22.500 15.500 93.500 90 89.500 94.500 17 21.500 10 29z" />
      ) : (
        <path d="M114 0L84 6.500 89.500 13 -1 88.500 4.500 93.500 95 18.500 101.500 27z" />
      )}
    </svg>
  );
}

export default function App() {
  return (
    <main className="relative min-h-screen overflow-hidden bg-[#e9d4ee]">
      <Backdrop />

      <div className="absolute top-[18px] left-[15px] w-[63.28%] pt-[18px] pr-[77px] pb-[58px] pl-3 shadow-[0_10px_34px_4px_rgba(40,15,45,0.5)]">
        <Wallpaper />
        <FirewallWindow body="h-[533px]" table="h-[496px]">
          <PropertiesDialog active={false} place="top-[40px] left-[388px] h-[535px] w-[413px]" />
          <IpDialog />
        </FirewallWindow>
        <Pointer className="top-[348px] left-[343px] h-[94px] w-[114px]" />
      </div>

      <div className="absolute top-[357px] right-[19px] left-[36.43%] pt-[17px] pr-[77px] pb-[66px] pl-3 shadow-[0_10px_34px_4px_rgba(40,15,45,0.5)]">
        <Wallpaper />
        <FirewallWindow body="h-[526px]" table="h-[491px]">
          <PropertiesDialog active place="top-[40px] left-[384px] h-[529px] w-[408px]" />
        </FirewallWindow>
        <Pointer flip className="top-[302px] left-[732px] h-[94px] w-[114px]" />
        <div className={clsx("pointer-events-none absolute right-0 bottom-[30px] left-[936px] overflow-hidden whitespace-nowrap font-['Open_Sans','Noto_Sans',sans-serif]")}>
          <p className="text-[17px] leading-[24px] text-[#bdbdbd]">Активация Windows</p>
          <p className="text-[13px] leading-[18px] text-[#566d8c]">Чтобы активировать Windows, перейдите</p>
          <p className="text-[13px] leading-[18px] text-[#566d8c]">"Параметры".</p>
        </div>
      </div>
    </main>
  );
}
